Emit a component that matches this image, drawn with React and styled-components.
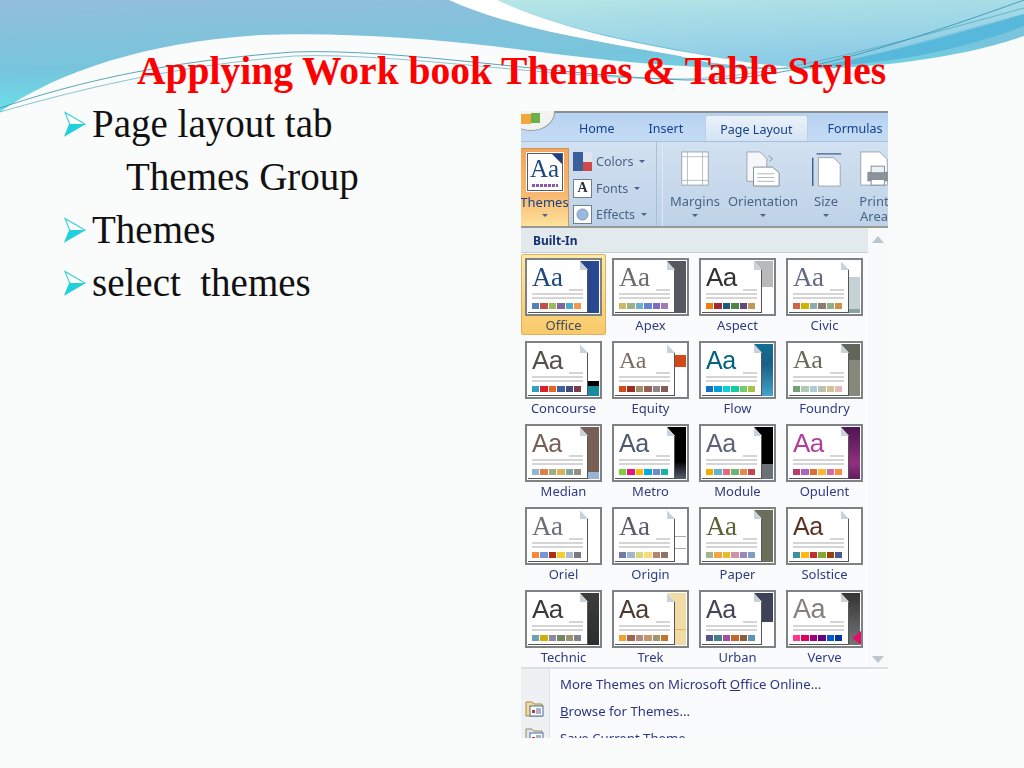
import React from 'react'
import styled, { createGlobalStyle } from 'styled-components'

const themes = [
  { name: 'Office', aa: '#1f497d', font: 'serif', size: 27, side: 'linear-gradient(90deg,#17316f,#2a4a94)', colors: ['#4f81bd', '#c0504d', '#9bbb59', '#8064a2', '#4bacc6', '#f79646'], selected: true },
  { name: 'Apex', aa: '#6f6a70', font: 'serif', size: 27, side: '#55585f', colors: ['#ceb966', '#9cb084', '#6bb1c9', '#6585cf', '#7e6bc9', '#a379bb'] },
  { name: 'Aspect', aa: '#323232', font: 'sans', size: 26, side: 'linear-gradient(180deg,#b9b9b9 0 50%,#fff 50%)', colors: ['#f07f09', '#9f2936', '#1b587c', '#4e8542', '#604878', '#c19859'] },
  { name: 'Civic', aa: '#646b86', font: 'serif', size: 27, side: 'linear-gradient(180deg,#fff 0 32%,#c5d1d5 32% 90%,#86a5a3 90%)', colors: ['#d16349', '#ccb400', '#8cadae', '#8c7b70', '#8fb08c', '#d19049'] },
  { name: 'Concourse', aa: '#55504a', font: 'sans', size: 26, side: 'linear-gradient(180deg,#fff 0 70%,#000 70% 80%,#1b8a9e 80%)', colors: ['#2da2bf', '#da1f28', '#eb641b', '#39639d', '#474b78', '#7d3c4a'] },
  { name: 'Equity', aa: '#7a6c64', font: 'serif', size: 24, side: 'linear-gradient(180deg,#fff 0 22%,#d34817 22% 45%,#fff 45%)', colors: ['#d34817', '#9b2d1f', '#a28e6a', '#956251', '#918485', '#855d5d'] },
  { name: 'Flow', aa: '#04617b', font: 'sans', size: 25, side: 'linear-gradient(180deg,#0f6f94,#1a5f86 40%,#45a5cc)', colors: ['#0f6fc6', '#009dd9', '#0bd0d9', '#10cf9b', '#7cca62', '#a5c249'] },
  { name: 'Foundry', aa: '#676a55', font: 'serif', size: 26, side: 'linear-gradient(180deg,#62665a 0 32%,#85887a 32%)', colors: ['#72a376', '#b0ccb0', '#a8cdd7', '#c0beaf', '#cec597', '#e8b7b7'] },
  { name: 'Median', aa: '#775f55', font: 'sans', size: 25, side: 'linear-gradient(180deg,#775f55 0 85%,#94b6d2 85%)', colors: ['#94b6d2', '#dd8047', '#a5ab81', '#d8b25c', '#7ba79d', '#968c8c'] },
  { name: 'Metro', aa: '#4e5b6f', font: 'sans', size: 25, side: 'linear-gradient(180deg,#000 0 65%,#5a6478)', colors: ['#7fd13b', '#ea157a', '#feb80a', '#00addc', '#738ac8', '#1ab39f'] },
  { name: 'Module', aa: '#5a6378', font: 'sans', size: 25, side: 'linear-gradient(180deg,#000 0 70%,#6c7078 70%)', colors: ['#f0ad00', '#60b5cc', '#e66c7d', '#6bb76d', '#e88651', '#c64847'] },
  { name: 'Opulent', aa: '#b13f9a', font: 'sans', size: 26, side: 'linear-gradient(180deg,#4a1450,#92307f 70%,#5c1a5c)', colors: ['#b83d68', '#ac66bb', '#de6c36', '#f9b639', '#cf6da4', '#fa8d3d'] },
  { name: 'Oriel', aa: '#6a6f78', font: 'serif', size: 27, side: '#fff', colors: ['#fe8637', '#7598d9', '#b32c16', '#f5cd2d', '#aebad5', '#777c84'] },
  { name: 'Origin', aa: '#5c5c68', font: 'serif', size: 27, side: 'linear-gradient(180deg,#fff 0 50%,#aaa 50% 52%,#fff 52% 72%,#aaa 72% 74%,#fff 74%)', colors: ['#727ca3', '#9fb8cd', '#d2da7a', '#fada7a', '#b88472', '#8e736a'] },
  { name: 'Paper', aa: '#5a6233', font: 'serif', size: 27, side: '#6a6e5a', colors: ['#a5b592', '#f3a447', '#e7bc29', '#d092a7', '#9c85c0', '#809ec2'] },
  { name: 'Solstice', aa: '#5b3524', font: 'sans', size: 25, side: '#fff', colors: ['#3891a7', '#feb80a', '#c32d2e', '#84aa33', '#964305', '#475a8d'] },
  { name: 'Technic', aa: '#3b3b3b', font: 'sans', size: 26, side: 'linear-gradient(180deg,#3c3c3c,#2b2d2d)', colors: ['#6ea0b0', '#ccaf0a', '#8d89a4', '#748560', '#9e9273', '#7e848d'] },
  { name: 'Trek', aa: '#4e3b30', font: 'sans', size: 25, side: 'linear-gradient(180deg,#f1dca6 0 68%,#e8b85c 68% 71%,#f1dca6 71%)', colors: ['#f0a22e', '#a5644e', '#b58b80', '#c3986d', '#a19574', '#c17529'] },
  { name: 'Urban', aa: '#424456', font: 'sans', size: 25, side: 'linear-gradient(180deg,#3e4258 0 55%,#fff 55%)', colors: ['#53548a', '#438086', '#a04da3', '#c4652d', '#8b5d3d', '#5c92b5'] },
  { name: 'Verve', aa: '#85807c', font: 'thin', size: 27, side: 'linear-gradient(180deg,#333,#777)', colors: ['#ff388c', '#e40059', '#9c007f', '#68007f', '#005bd3', '#00349e'], flag: true },
]

const Global = createGlobalStyle`
  html, body { margin: 0; padding: 0; background: #fafbfb; }
`

const Slide = styled.div`
  position: relative;
  width: 1024px;
  height: 768px;
  overflow: hidden;
  background: #fafbfb;
  font-family: "Liberation Serif", serif;
`

const Waves = styled.svg`
  position: absolute;
  left: 0;
  top: 0;
`

const Content = styled.div`
  position: relative;
`

const Title = styled.h1`
  margin: 0;
  height: 97px;
  padding: 49px 0 0 137px;
  box-sizing: border-box;
  font-size: 39.5px;
  line-height: 44px;
  font-weight: bold;
  color: #ff0000;
  white-space: nowrap;
`

const Body = styled.div`
  display: flex;
`

const List = styled.ul`
  list-style: none;
  margin: 0;
  padding: 0 0 0 64px;
  width: 521px;
  box-sizing: border-box;
`

const Item = styled.li`
  display: flex;
  align-items: center;
  gap: 6px;
  height: 53px;
  padding-left: ${p => (p.$indent ? '62px' : '0')};
  font-size: 39px;
  color: #111;
  white-space: pre;
`

const Panel = styled.div`
  position: relative;
  width: 367px;
  height: 627px;
  margin-top: 14px;
  overflow: hidden;
  background: #fafbfc;
  font-family: "Noto Sans", sans-serif;
  filter: blur(0.35px);
`

const OfficeBall = styled.div`
  position: absolute;
  left: -14px;
  top: -18px;
  width: 48px;
  height: 38px;
  border-radius: 50%;
  background: #f2f2f0;
  border: 1px solid #9a9a90;
  display: flex;
  justify-content: center;
  align-items: flex-end;
  padding-bottom: 5px;
  box-sizing: border-box;
`

const Tabs = styled.div`
  display: flex;
  align-items: flex-end;
  height: 31px;
  padding-left: 58px;
  gap: 34px;
  box-sizing: border-box;
  border-top: 2px solid #8b8f94;
  background: linear-gradient(180deg, #b7d3f2, #c5dbf4);
  border-bottom: 1px solid #a5c0dc;
`

const Tab = styled.div`
  height: ${p => (p.$active ? '26px' : '22px')};
  padding: ${p => (p.$active ? '4px 14px 0' : '0')};
  margin: ${p => (p.$active ? '0 -14px 0 -12px' : '0')};
  box-sizing: border-box;
  font-size: 12.5px;
  line-height: 20px;
  color: #15428b;
  white-space: nowrap;
  border-radius: 3px 3px 0 0;
  background: ${p => (p.$active ? 'linear-gradient(180deg,#eaf2fa,#d4e3f3)' : 'transparent')};
  border: ${p => (p.$active ? '1px solid #b8cfe6' : 'none')};
  border-bottom: none;
`

const Ribbon = styled.div`
  display: flex;
  height: 86px;
  background: linear-gradient(180deg, #d2e1f1, #bed2e7);
  border-bottom: 2px solid #9a9a94;
  box-sizing: border-box;
`

const ThemesButton = styled.div`
  display: flex;
  flex-direction: column;
  align-items: center;
  flex: none;
  width: 48px;
  margin-top: 6px;
  padding-top: 4px;
  background: linear-gradient(180deg, #f6a35c 0, #f9b870 60%, #fde29c 100%);
  border: 1px solid #c89a5a;
  border-left: none;
  border-bottom: none;
  box-sizing: border-box;
  font-size: 13px;
  color: #15428b;
`

const AaIcon = styled.div`
  position: relative;
  flex: none;
  width: 36px;
  height: 38px;
  background: #fff;
  border: 1px solid #5a5a5a;
  outline: 1px solid #fff;
  box-sizing: border-box;
  font-family: "Liberation Serif", serif;
  font-size: 25px;
  line-height: 30px;
  color: #1f497d;
  text-align: center;
`

const Corner = styled.span`
  position: absolute;
  right: 0;
  top: 0;
  border-top: 10px solid #1f3f7f;
  border-left: 10px solid transparent;
`

const DotRow = styled.span`
  position: absolute;
  left: 4px;
  right: 4px;
  bottom: 3px;
  height: 3px;
  background: repeating-linear-gradient(90deg, #8a5aa8 0 3px, #fff 3px 4px);
`

const Drop = styled.span`
  display: block;
  width: 0;
  margin: ${p => p.$margin || '5px auto 0'};
  border-top: 3px solid #4a6488;
  border-left: 3px solid transparent;
  border-right: 3px solid transparent;
`

const ThemeLabel = styled.span`
  margin-top: 4px;
  line-height: 14px;
`

const SmallStack = styled.div`
  display: flex;
  flex-direction: column;
  flex: none;
  gap: 7.5px;
  width: 88px;
  padding: 10px 0 0 4px;
  box-sizing: border-box;
  border-right: 1px solid #aac0d8;
`

const SmallRow = styled.div`
  display: flex;
  align-items: center;
  gap: 4px;
  height: 19px;
  font-size: 12.5px;
  color: #4a6488;
`

const SmallIcon = styled.div`
  width: 19px;
  height: 19px;
  box-sizing: border-box;
  background: #fff;
  border: 1px solid #6f7f90;
  display: flex;
  align-items: center;
  justify-content: center;
  font-family: "Liberation Serif", serif;
  font-size: 14px;
  font-weight: bold;
  color: #333;
`

const PageGroup = styled.div`
  display: flex;
  margin-left: 5px;
  padding-top: 9px;
  flex: 1;
  border-left: 1px solid #dce7f3;
  overflow: hidden;
`

const Tool = styled.div`
  display: flex;
  flex-direction: column;
  align-items: center;
  flex: none;
  width: ${p => p.$w}px;
  font-size: 13px;
  line-height: 15px;
  color: #4a6488;
  text-align: center;
`

const ToolIcon = styled.svg`
  display: block;
  height: 36px;
  margin-bottom: 7px;
  flex: none;
`

const Main = styled.div`
  display: flex;
`

const GalleryCol = styled.div`
  width: 347px;
`

const Heading = styled.div`
  height: 25px;
  padding-left: 12px;
  box-sizing: border-box;
  background: #e3eaee;
  border-bottom: 1px solid #c5ced4;
  font-size: 12px;
  font-weight: bold;
  line-height: 26px;
  color: #15306f;
`

const Grid = styled.div`
  display: grid;
  grid-template-columns: repeat(4, 85px);
  grid-auto-rows: 81px;
  column-gap: 2px;
  row-gap: 2px;
  padding-top: 1px;
`

const Cell = styled.div`
  display: flex;
  flex-direction: column;
  align-items: center;
  padding-top: ${p => (p.$selected ? '3px' : '4px')};
  box-sizing: border-box;
  border-radius: 2px;
  background: ${p => (p.$selected ? 'linear-gradient(180deg,#fde9a8,#f9c969)' : 'transparent')};
  border: ${p => (p.$selected ? '1px solid #e0b060' : 'none')};
`

const Tile = styled.div`
  position: relative;
  flex: none;
  width: 77px;
  height: 58px;
  box-sizing: border-box;
  border: 2px solid #7f8285;
  outline: 1px solid #fff;
  outline-offset: -3px;
  background: ${p => p.$side};
`

const Sheet = styled.div`
  position: absolute;
  left: 1px;
  top: 1px;
  width: 60px;
  height: 52px;
  padding: 2px 4px 0 4px;
  box-sizing: border-box;
  background: #fff;
  clip-path: polygon(0 0, 52px 0, 100% 9px, 100% 100%, 0 100%);
  border-right: 1px solid #555;
  border-bottom: 1px solid #555;

  &::after {
    content: '';
    position: absolute;
    right: -1px;
    top: 0;
    width: 8px;
    height: 9px;
    background: linear-gradient(225deg, transparent 50%, #c9d2da 50%);
  }
`

const AaRow = styled.div`
  display: flex;
  justify-content: space-between;
  align-items: flex-end;
  height: 28px;
`

const Aa = styled.span`
  font-family: ${p => (p.$font === 'serif' ? '"Liberation Serif", serif' : '"Liberation Sans", sans-serif')};
  font-weight: ${p => (p.$font === 'thin' ? 300 : 400)};
  font-size: ${p => p.$size}px;
  line-height: 28px;
  letter-spacing: -0.5px;
  color: ${p => p.$color};
`

const Rule = styled.span`
  display: block;
  height: 2px;
  background: #d5d5d5;
  margin-top: 2px;
  width: ${p => p.$w || '100%'};
`

const Swatches = styled.div`
  display: flex;
  gap: 1px;
  margin-top: 4px;
`

const Swatch = styled.span`
  width: 7.4px;
  height: 6px;
  background: ${p => p.$c};
`

const Flag = styled.span`
  position: absolute;
  right: 0;
  bottom: 1px;
  border-right: 9px solid #e0106a;
  border-top: 7px solid transparent;
  border-bottom: 7px solid transparent;
`

const CellName = styled.span`
  margin-top: 1px;
  font-size: 13px;
  line-height: 17px;
  color: ${p => (p.$selected ? '#3f4a5c' : '#2f3a85')};
`

const ScrollCol = styled.div`
  flex: 1;
  display: flex;
  flex-direction: column;
  justify-content: space-between;
  align-items: flex-start;
  padding: 8px 0 4px 4px;
  box-sizing: border-box;
  background: #f8f9fa;
`

const Arrow = styled.span`
  width: 0;
  border-left: 6px solid transparent;
  border-right: 6px solid transparent;
  border-bottom: ${p => (p.$up ? '7px solid #bcc6ce' : 'none')};
  border-top: ${p => (p.$up ? 'none' : '7px solid #bcc6ce')};
`

const Footer = styled.div`
  display: flex;
  height: 100px;
  border-top: 2px solid #dcdfe2;
`

const IconStrip = styled.div`
  display: flex;
  flex-direction: column;
  width: 29px;
  padding: 30px 0 0 4px;
  gap: 9px;
  box-sizing: border-box;
  background: #eef1f3;
  border-right: 1px solid #dfe3e6;
`

const Menu = styled.div`
  padding: 3px 0 0 10px;
`

const MenuItem = styled.div`
  height: 27px;
  font-size: 13.2px;
  line-height: 24px;
  color: #2f3585;
  white-space: nowrap;
`

const Bullet = () => (
  <svg width="22" height="26" viewBox="0 0 23 26" style={{ flex: 'none' }}>
    <path d="M1 1 L22 13 L1 25 L6 13 Z" fill="#fff" stroke="#25cfd8" strokeWidth="1.1" />
    <path d="M22 13 L1 25 L6 13 Z" fill="#20d0dc" />
  </svg>
)

const FolderIcon = ({ variant }) => (
  <svg width="19" height="18" viewBox="0 0 19 18">
    <path d="M1 3h6l2 2h8v12H1z" fill={variant ? '#dfe6f2' : '#f3dc94'} stroke="#a08a50" />
    <rect x="5" y="7" width="13" height="10" fill="#fff" stroke="#4a6a9a" />
    <rect x="7" y="11" width="3" height="3" fill="#d03030" />
    <path d="M11 10h5M11 12h5M11 14h5" stroke="#4a6a9a" />
  </svg>
)

const App = () => {
  return (
    <Slide>
      <Global />
      <Waves width="1024" height="130" viewBox="0 0 1024 130">
        <defs>
          <linearGradient id="blue" x1="0" y1="0" x2="0.25" y2="1">
            <stop offset="0" stopColor="#93bedb" />
            <stop offset="0.6" stopColor="#76c5dc" />
            <stop offset="1" stopColor="#68e4ea" />
          </linearGradient>
          <linearGradient id="teal" x1="0" y1="0" x2="0.4" y2="1">
            <stop offset="0" stopColor="#b6e6e6" />
            <stop offset="1" stopColor="#8ccbe6" />
          </linearGradient>
        </defs>
        <path d="M0 0H1024V36C960 58 880 68 800 69C680 70 600 60 500 47C420 37 330 32 260 35C150 42 60 70 0 112Z" fill="url(#blue)" />
        <path d="M449 0H500C560 30 640 45 720 58L800 68C740 68 700 62 680 56C600 42 510 28 449 0Z" fill="#fff" />
        <path d="M497 0H1024V14C960 30 900 50 835 62C800 69 760 66 722 58C640 42 560 30 497 0Z" fill="url(#teal)" />
        <path d="M822 66C890 52 960 34 1024 14V26C960 50 890 64 822 66Z" fill="#58b8dc" />
        <path d="M0 108C60 88 150 62 294 52C400 48 560 76 686 80C760 80 830 70 1024 0" fill="none" stroke="#2f8fa8" strokeWidth="0.8" />
        <path d="M0 112C70 92 170 66 294 56C400 52 560 80 686 79C770 76 850 56 1024 8" fill="none" stroke="#3aa0b5" strokeWidth="0.6" />
      </Waves>
      <Content>
        <Title>Applying Work book Themes &amp; Table Styles</Title>
        <Body>
          <List>
            <Item><Bullet />Page layout tab</Item>
            <Item $indent>Themes Group</Item>
            <Item><Bullet />Themes</Item>
            <Item><Bullet />select  themes</Item>
          </List>
          <Panel>
            <Tabs>
              <Tab>Home</Tab>
              <Tab>Insert</Tab>
              <Tab $active>Page Layout</Tab>
              <Tab>Formulas</Tab>
            </Tabs>
            <OfficeBall>
              <svg width="22" height="12" viewBox="0 0 22 12">
                <rect x="1" y="1" width="10" height="10" fill="#f0a83c" />
                <rect x="11" y="0" width="9" height="10" fill="#6cb04a" />
              </svg>
            </OfficeBall>
            <Ribbon>
              <ThemesButton>
                <AaIcon>
                  Aa
                  <Corner />
                  <DotRow />
                </AaIcon>
                <ThemeLabel>Themes</ThemeLabel>
                <Drop />
              </ThemesButton>
              <SmallStack>
                <SmallRow>
                  <svg width="19" height="19" viewBox="0 0 19 19">
                    <rect width="10" height="10" fill="#3a5f9a" />
                    <rect x="10" width="9" height="10" fill="#dfe6f0" />
                    <rect y="10" width="10" height="9" fill="#3a5f9a" />
                    <rect x="10" y="10" width="9" height="9" fill="#d04a4a" />
                  </svg>
                  Colors
                  <Drop $margin="0 0 0 2px" />
                </SmallRow>
                <SmallRow>
                  <SmallIcon>A</SmallIcon>
                  Fonts
                  <Drop $margin="0 0 0 2px" />
                </SmallRow>
                <SmallRow>
                  <SmallIcon>
                    <svg width="13" height="13" viewBox="0 0 13 13">
                      <circle cx="6.5" cy="6.5" r="5.5" fill="#9db8de" stroke="#7f97b8" />
                    </svg>
                  </SmallIcon>
                  Effects
                  <Drop $margin="0 0 0 2px" />
                </SmallRow>
              </SmallStack>
              <PageGroup>
                <Tool $w={64}>
                  <ToolIcon width="30" viewBox="0 0 30 38">
                    <rect x="1" y="1" width="28" height="35" fill="#fff" stroke="#9aa4ae" />
                    <path d="M7 1v35M23 1v35M1 6h28M1 31h28" stroke="#b5bcc4" />
                  </ToolIcon>
                  Margins
                  <Drop />
                </Tool>
                <Tool $w={72}>
                  <ToolIcon width="36" viewBox="0 0 36 38">
                    <path d="M1 1h14l7 7v24H1z" fill="#f6f7f9" stroke="#9aa4ae" />
                    <path d="M8 17h20l7 6v14H8z" fill="#fff" stroke="#7f8a96" />
                    <path d="M12 24h18M12 28h18M12 32h18" stroke="#aab3bc" />
                    <path d="M24 5l4 3-3 3" fill="none" stroke="#7f8a96" />
                  </ToolIcon>
                  Orientation
                  <Drop />
                </Tool>
                <Tool $w={54}>
                  <ToolIcon width="32" viewBox="0 0 32 38">
                    <path d="M6 3h26M2 7v30" stroke="#3f5f8f" strokeWidth="1.5" />
                    <path d="M8 7h16l7 7v23H8z" fill="#fff" stroke="#9aa4ae" />
                  </ToolIcon>
                  Size
                  <Drop />
                </Tool>
                <Tool $w={42}>
                  <ToolIcon width="30" viewBox="0 0 30 38">
                    <path d="M1 1h20l8 8v27H1z" fill="#fff" stroke="#9aa4ae" />
                    <rect x="8" y="22" width="22" height="10" fill="#8a929c" />
                    <rect x="12" y="16" width="14" height="7" fill="#eef1f4" stroke="#7f8a96" />
                    <rect x="12" y="30" width="14" height="6" fill="#fff" stroke="#7f8a96" />
                  </ToolIcon>
                  Print Area
                </Tool>
              </PageGroup>
            </Ribbon>
            <Main>
              <GalleryCol>
                <Heading>Built-In</Heading>
                <Grid>
                  {themes.map(t => (
                    <Cell key={t.name} $selected={t.selected}>
                      <Tile $side={t.side}>
                        <Sheet>
                          <AaRow>
                            <Aa $font={t.font} $size={t.size} $color={t.aa}>Aa</Aa>
                            <Rule $w="14px" />
                          </AaRow>
                          <Rule />
                          <Rule />
                          <Swatches>
                            {t.colors.map((c, i) => <Swatch key={i} $c={c} />)}
                          </Swatches>
                        </Sheet>
                        {t.flag && <Flag />}
                      </Tile>
                      <CellName $selected={t.selected}>{t.name}</CellName>
                    </Cell>
                  ))}
                </Grid>
              </GalleryCol>
              <ScrollCol>
                <Arrow $up />
                <Arrow />
              </ScrollCol>
            </Main>
            <Footer>
              <IconStrip>
                <FolderIcon />
                <FolderIcon variant />
              </IconStrip>
              <Menu>
                <MenuItem>More Themes on Microsoft <u>O</u>ffice Online...</MenuItem>
                <MenuItem><u>B</u>rowse for Themes...</MenuItem>
                <MenuItem>Save Current Theme...</MenuItem>
              </Menu>
            </Footer>
          </Panel>
        </Body>
      </Content>
    </Slide>
  )
}

export default App
